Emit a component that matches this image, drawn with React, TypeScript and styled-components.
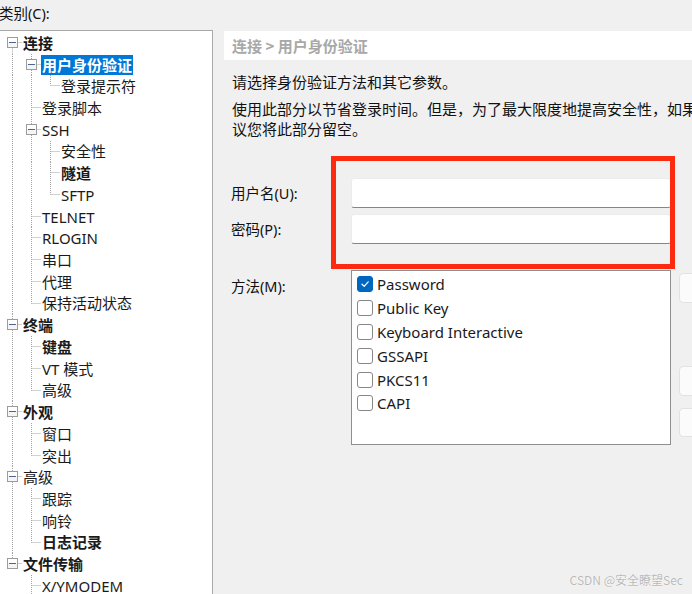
import React from "react";
import styled, { createGlobalStyle } from "styled-components";

const GlobalStyle = createGlobalStyle`
  html, body { margin: 0; padding: 0; background: #f0f0f0; overflow: hidden; }
  body { font-family: "Noto Sans", "Noto Sans CJK SC", sans-serif; }
  * { box-sizing: border-box; }
`;

const ROW_H = 21.72;
const INDENT = 19;

type TreeNode = { label: string; bold?: boolean; selected?: boolean; children?: TreeNode[] };
type FlatRow = { node: TreeNode; level: number; guides: boolean[]; last: boolean; first: boolean };

const TREE: TreeNode[] = [
  {
    label: "连接",
    bold: true,
    children: [
      { label: "用户身份验证", bold: true, selected: true, children: [{ label: "登录提示符" }] },
      { label: "登录脚本" },
      { label: "SSH", children: [{ label: "安全性" }, { label: "隧道", bold: true }, { label: "SFTP" }] },
      { label: "TELNET" },
      { label: "RLOGIN" },
      { label: "串口" },
      { label: "代理" },
      { label: "保持活动状态" },
    ],
  },
  { label: "终端", bold: true, children: [{ label: "键盘", bold: true }, { label: "VT 模式" }, { label: "高级" }] },
  { label: "外观", bold: true, children: [{ label: "窗口" }, { label: "突出" }] },
  { label: "高级", children: [{ label: "跟踪" }, { label: "响铃" }, { label: "日志记录", bold: true }] },
  { label: "文件传输", bold: true, children: [{ label: "X/YMODEM" }, { label: "ZMODEM" }] },
];

function flatten(nodes: TreeNode[], level = 0, guides: boolean[] = [], out: FlatRow[] = []): FlatRow[] {
  nodes.forEach((n, i) => {
    const last = i === nodes.length - 1;
    out.push({ node: n, level, guides, last, first: level === 0 && i === 0 });
    if (n.children) flatten(n.children, level + 1, [...guides, !last], out);
  });
  return out;
}

const METHODS = [
  { label: "Password", checked: true },
  { label: "Public Key" },
  { label: "Keyboard Interactive" },
  { label: "GSSAPI" },
  { label: "PKCS11" },
  { label: "CAPI" },
];

const Window = styled.div`
  position: relative;
  width: 692px;
  height: 594px;
  overflow: hidden;
  background: #f0f0f0;
  color: #000;
  font-family: "Noto Sans", "Noto Sans CJK SC", sans-serif;
`;

const CategoryLabel = styled.div`
  height: 26px;
  line-height: 26px;
  margin: 0 0 4px -1px;
  font-size: 14.5px;
  color: #111;
`;

const Body = styled.div`
  display: grid;
  grid-template-columns: 214px 620px;
  column-gap: 11px;
  margin-left: -1px;
  align-items: start;
`;

const TreeBox = styled.div`
  height: 600px;
  background: #fff;
  border: 1px solid #a9a9a9;
  padding-top: 1px;
  overflow: hidden;
`;

const TreeRow = styled.div`
  display: flex;
  align-items: center;
  height: ${ROW_H}px;
`;

const Guide = styled.svg`
  flex: none;
  display: block;
`;

const NodeLabel = styled.span<{ $bold?: boolean; $selected?: boolean }>`
  padding: 0 1px;
  line-height: 20px;
  font-size: 15px;
  white-space: nowrap;
  font-weight: ${(p) => (p.$bold ? 700 : 400)};
  background: ${(p) => (p.$selected ? "#0078d7" : "transparent")};
  color: ${(p) => (p.$selected ? "#fff" : "#1a1a1a")};
`;

function Connector({ row }: { row: FlatRow }) {
  const H = ROW_H;
  const cy = Math.floor(H / 2) + 0.5;
  const w = 22 + INDENT * row.level;
  const x = 12.5 + INDENT * row.level;
  const stroke = "#a3a3a3";
  const dash = "1 1";
  return (
    <Guide width={w} height={H} viewBox={`0 0 ${w} ${H}`}>
      {row.guides.map((g, a) =>
        g ? (
          <line key={a} x1={12.5 + INDENT * a} y1={0} x2={12.5 + INDENT * a} y2={H} stroke={stroke} strokeDasharray={dash} />
        ) : null
      )}
      <line x1={x} y1={row.first ? cy : 0} x2={x} y2={row.last ? cy : H} stroke={stroke} strokeDasharray={dash} />
      <line x1={x} y1={cy} x2={w} y2={cy} stroke={stroke} strokeDasharray={dash} />
      {row.node.children ? (
        <g>
          <rect x={x - 5} y={cy - 5} width={10} height={10} fill="#f5f5f5" stroke="#9c9c9c" />
          <rect x={x - 4.5} y={cy - 4.5} width={9} height={4} fill="#ffffff" />
          <line x1={x - 3.5} y1={cy} x2={x + 3.5} y2={cy} stroke="#4c6290" />
        </g>
      ) : null}
    </Guide>
  );
}

const Panel = styled.div`
  margin-top: 1px;
`;

const PanelHeader = styled.div`
  height: 29px;
  line-height: 29px;
  background: #fff;
  padding-left: 8px;
  font-size: 15px;
  font-weight: 700;
  color: #a8a8a8;
  font-family: "Noto Sans CJK SC", sans-serif;
`;

const Description = styled.div`
  padding: 12px 0 0 8px;
  width: 600px;
  font-family: "Noto Sans CJK SC", sans-serif;
  font-size: 15px;
  line-height: 19.5px;
  color: #111;
`;

const Para = styled.p<{ $gap?: number }>`
  margin: ${(p) => p.$gap ?? 0}px 0 0 0;
`;

const Form = styled.div`
  margin-top: 39.5px;
  padding-left: 7px;
  display: flex;
  flex-direction: column;
`;

const FieldRow = styled.div<{ $gap?: number; $top?: boolean }>`
  display: flex;
  align-items: ${(p) => (p.$top ? "flex-start" : "center")};
  margin-top: ${(p) => p.$gap ?? 0}px;
`;

const FieldLabel = styled.label<{ $top?: boolean }>`
  width: 120px;
  flex: none;
  font-size: 14.5px;
  line-height: 20px;
  color: #111;
  margin-top: ${(p) => (p.$top ? 6 : 0)}px;
`;

const TextBox = styled.input`
  width: 320px;
  height: 30px;
  flex: none;
  background: #fff;
  border: 1px solid #ececec;
  border-bottom-color: #868686;
  border-radius: 3px;
  outline: none;
  padding: 0 8px;
  font: inherit;
`;

const ListBox = styled.div`
  width: 320px;
  height: 175px;
  flex: none;
  background: #fff;
  border: 1px solid #8f8f8f;
  padding: 2px 0 0 5px;
`;

const ListItem = styled.div`
  display: flex;
  align-items: center;
  gap: 4px;
  height: 23.8px;
  font-size: 15px;
  color: #1a1a1a;
`;

const Check = styled.span<{ $checked?: boolean }>`
  width: 16px;
  height: 16px;
  flex: none;
  border-radius: 3px;
  display: flex;
  align-items: center;
  justify-content: center;
  background: ${(p) => (p.$checked ? "#0067c0" : "#fff")};
  border: 1px solid ${(p) => (p.$checked ? "#0067c0" : "#878787")};
`;

const ButtonColumn = styled.div`
  display: flex;
  flex-direction: column;
  margin-left: 8px;
  padding-top: 3px;
`;

const SideButton = styled.button<{ $gap?: number; $h?: number }>`
  width: 100px;
  height: ${(p) => p.$h ?? 30}px;
  margin-top: ${(p) => p.$gap ?? 0}px;
  background: #fbfbfb;
  border: 1px solid #e2e2e2;
  border-radius: 4px;
  font-family: "Noto Sans CJK SC", sans-serif;
  font-size: 14px;
  color: #000;
  padding: 0 0 0 60px;
  text-align: left;
`;

const Annotation = styled.div`
  position: absolute;
  left: 331px;
  top: 156px;
  width: 344px;
  height: 113px;
  border: 5px solid #fd2a12;
  pointer-events: none;
`;

const Watermark = styled.div`
  position: absolute;
  right: 9px;
  bottom: 7px;
  font-family: "Noto Sans CJK SC", sans-serif;
  font-size: 12px;
  line-height: 14px;
  color: #b9b9b9;
  text-shadow: 0 0 1px #fff, 0 0 1px #fff;
`;

function CheckMark() {
  return (
    <svg width="10" height="10" viewBox="0 0 10 10">
      <path d="M2 5.2 L4.2 7.3 L8.2 2.8" fill="none" stroke="#fff" strokeWidth="1.2" strokeLinecap="round" strokeLinejoin="round" />
    </svg>
  );
}

export default function App() {
  const rows = flatten(TREE);
  return (
    <>
      <GlobalStyle />
      <Window>
        <CategoryLabel>类别(C):</CategoryLabel>
        <Body>
          <TreeBox>
            {rows.map((r, i) => (
              <TreeRow key={i}>
                <Connector row={r} />
                <NodeLabel $bold={r.node.bold} $selected={r.node.selected}>
                  {r.node.label}
                </NodeLabel>
              </TreeRow>
            ))}
          </TreeBox>
          <Panel>
            <PanelHeader>连接 &gt; 用户身份验证</PanelHeader>
            <Description>
              <Para>请选择身份验证方法和其它参数。</Para>
              <Para $gap={7.5}>
                使用此部分以节省登录时间。但是，为了最大限度地提高安全性，如果担心安全问题，建议您将此部分留空。
              </Para>
            </Description>
            <Form>
              <FieldRow>
                <FieldLabel>用户名(U):</FieldLabel>
                <TextBox />
              </FieldRow>
              <FieldRow $gap={6}>
                <FieldLabel>密码(P):</FieldLabel>
                <TextBox type="password" />
              </FieldRow>
              <FieldRow $gap={26} $top>
                <FieldLabel $top>方法(M):</FieldLabel>
                <ListBox>
                  {METHODS.map((m) => (
                    <ListItem key={m.label}>
                      <Check $checked={m.checked}>{m.checked ? <CheckMark /> : null}</Check>
                      {m.label}
                    </ListItem>
                  ))}
                </ListBox>
                <ButtonColumn>
                  <SideButton>属性(R)...</SideButton>
                  <SideButton $gap={63}>上移</SideButton>
                  <SideButton $gap={12} $h={29}>下移</SideButton>
                </ButtonColumn>
              </FieldRow>
            </Form>
          </Panel>
        </Body>
        <Annotation />
        <Watermark>CSDN @安全瞭望Sec</Watermark>
      </Window>
    </>
  );
}
